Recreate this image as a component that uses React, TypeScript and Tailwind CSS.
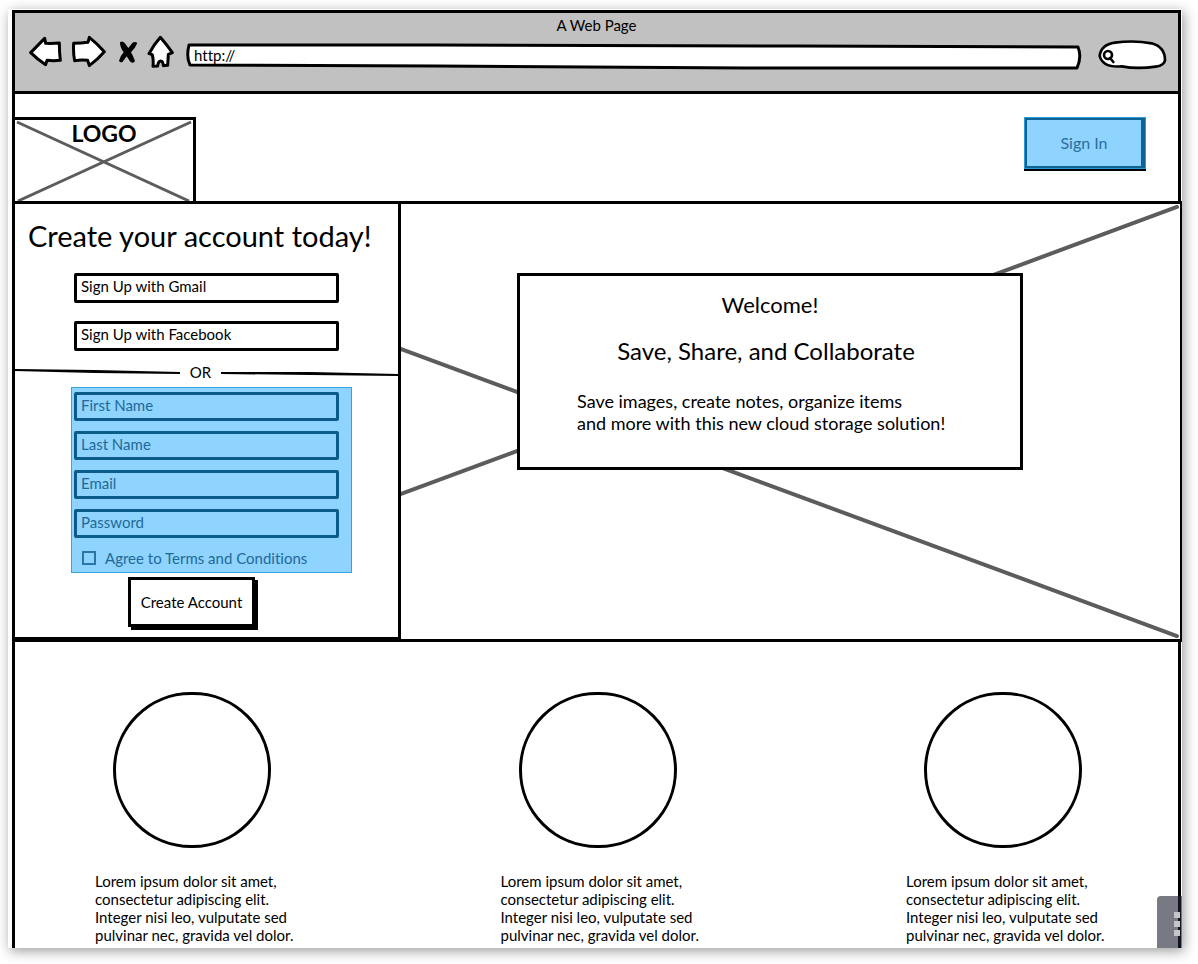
import React from "react";

const LOREM = [
  "Lorem ipsum dolor sit amet,",
  "consectetur adipiscing elit.",
  "Integer nisi leo, vulputate sed",
  "pulvinar nec, gravida vel dolor.",
];

const FIELDS = [
  { name: "First Name", type: "text" },
  { name: "Last Name", type: "text" },
  { name: "Email", type: "email" },
  { name: "Password", type: "password" },
];

function NavIcon({ kind }: { kind: "back" | "forward" | "stop" | "home" }) {
  const outline = {
    fill: "#fff",
    stroke: "#000",
    strokeWidth: 9,
    strokeLinejoin: "round" as const,
    strokeLinecap: "round" as const,
  };
  if (kind === "back")
    return (
      <svg viewBox="87 106 99 93" className="h-[31px] w-[33px]" aria-hidden="true">
        <path d="M92 156 L134 113 L137 128 Q158 129 178 127 Q178 154 181 179 Q160 181 141 179 L137 192 Q112 176 92 156Z" {...outline} />
      </svg>
    );
  if (kind === "forward")
    return (
      <svg viewBox="212 106 105 99" className="h-[33px] w-[35px]" aria-hidden="true">
        <path d="M220 131 Q242 131 263 128 L267 113 Q292 133 312 156 Q291 180 267 198 L262 182 Q242 180 223 183 Q218 158 220 131Z" {...outline} />
      </svg>
    );
  if (kind === "stop")
    return (
      <svg viewBox="354 114 60 72" className="h-6 w-5" aria-hidden="true">
        <path
          d="M360 121 Q367 115 374 123 L385 138 L397 123 Q404 117 412 123 Q406 138 393 151 Q400 163 405 177 Q400 186 391 179 L380 163 L368 179 Q361 184 357 176 Q360 163 371 151 Q360 137 360 121Z"
          fill="#000"
        />
      </svg>
    );
  return (
    <svg viewBox="440 104 81 99" className="h-[33px] w-[27px]" aria-hidden="true">
      <path d="M480 111 Q500 134 516 157 L504 162 L502 195 L489 196 Q488 182 481 182 Q474 182 472 197 L458 198 Q460 180 456 163 L446 160 Q460 134 480 111Z" {...outline} />
    </svg>
  );
}

function BrowserBar() {
  return (
    <header className="border-b-3 border-black bg-[#c1c1c1] pt-[2px] pb-[21px]">
      <h1 className="text-center text-[15px] leading-[20px]">A Web Page</h1>
      <div className="flex h-[35px] items-end pr-[10px] pl-[14px]">
        <nav className="flex shrink-0 items-center self-start" aria-label="Browser">
          <button type="button" aria-label="Back" className="mr-[9px]"><NavIcon kind="back" /></button>
          <button type="button" aria-label="Forward" className="mr-3"><NavIcon kind="forward" /></button>
          <button type="button" aria-label="Stop" className="mr-[9px]"><NavIcon kind="stop" /></button>
          <button type="button" aria-label="Home" className="mr-3"><NavIcon kind="home" /></button>
        </nav>
        <div className="relative h-[27px] grow">
          <svg viewBox="0 0 896 27" preserveAspectRatio="none" className="absolute inset-0 h-full w-full" aria-hidden="true">
            <path
              d="M3 2 L250 2 L610 3 L892 4 Q896 14 891 25 L560 25 L250 23 L4 22 Q0 14 3 2Z"
              fill="#fff" stroke="#000" strokeWidth="3" strokeLinejoin="round" vectorEffect="non-scaling-stroke"
            />
          </svg>
          <input aria-label="Address" defaultValue="http://" className="relative h-6 w-full bg-transparent px-2 text-[15px] outline-none" />
        </div>
        <div className="relative ml-4 h-[30px] w-[70px] shrink-0">
          <svg viewBox="597 124 210 90" className="absolute inset-0 h-full w-full" aria-hidden="true">
            <path
              d="M602 172 Q606 138 648 132 Q705 124 758 134 Q798 145 798 185 Q796 200 770 204 Q715 212 668 203 Q612 208 602 172Z"
              fill="#fff" stroke="#000" strokeWidth="8" strokeLinejoin="round"
            />
            <circle cx="627" cy="169" r="12" fill="#fff" stroke="#000" strokeWidth="8" />
            <path d="M633 178 L643 190" stroke="#000" strokeWidth="8" strokeLinecap="round" />
          </svg>
          <input aria-label="Search" className="relative h-full w-full bg-transparent pr-2 pl-5 text-[15px] outline-none" />
        </div>
      </div>
    </header>
  );
}

function TopBar() {
  return (
    <div className="flex items-start justify-between pt-[23px] pr-8">
      <div className="relative -ml-[3px] h-[84px] w-[184px] border-3 border-b-0 border-black">
        <svg viewBox="0 0 179 81" preserveAspectRatio="none" className="absolute inset-0 h-full w-full" aria-hidden="true">
          <path d="M2 2 L175 81 M177 2 L3 81" stroke="#5c5c5c" strokeWidth="3" fill="none" />
        </svg>
        <p className="relative text-center text-[23px] leading-[26px] font-bold">LOGO</p>
      </div>
      <div className="bg-[#8fd3ff] shadow-[0_2px_0_#000]">
        <button type="button" className="block h-[52px] w-[122px] border-3 border-r-[5px] border-[#0f6393] text-[16px] text-[#2a6f9a] outline-1 -outline-offset-1 outline-[#2b9ad6]">
          Sign In
        </button>
      </div>
    </div>
  );
}

function SignUpPanel() {
  return (
    <section className="relative w-[389px] shrink-0 border-x-3 border-b-2 border-black bg-white pt-[14px] pb-[10px]">
      <h2 className="pl-[13px] text-[29px] leading-[36px] whitespace-nowrap">Create your account today!</h2>
      <div className="mt-[19px] ml-[59px] flex w-[265px] flex-col gap-[18px]">
        <button type="button" className="h-[30px] rounded-[2px] border-[3px] border-black pb-1 pl-1 text-left text-[15px] leading-5">Sign Up with Gmail</button>
        <button type="button" className="h-[30px] rounded-[2px] border-[3px] border-black pb-1 pl-1 text-left text-[15px] leading-5">Sign Up with Facebook</button>
      </div>
      <div className="mt-[11px] flex items-center justify-between">
        <svg viewBox="0 0 165 8" className="h-2 w-[165px]" aria-hidden="true">
          <path d="M0 1 L80 2 L165 4 L165 6 L80 5 L0 3Z" fill="#000" />
        </svg>
        <span className="text-[15px] leading-5">OR</span>
        <svg viewBox="0 0 177 8" className="h-2 w-[177px]" aria-hidden="true">
          <path d="M0 4 L90 4 L177 6 L177 8 L90 7 L0 6Z" fill="#000" />
        </svg>
      </div>
      <form onSubmit={(e) => e.preventDefault()}>
        <div className="mt-[5px] ml-14 flex w-[281px] flex-col gap-[10px] border border-[#36a3e0] bg-[#8fd3ff] px-[2px] pt-1 pb-1">
          {FIELDS.map((f) => (
            <input
              key={f.name}
              type={f.type}
              aria-label={f.name}
              placeholder={f.name}
              className="h-[29px] w-[265px] rounded-[2px] border-3 border-[#0c5c8b] bg-transparent pb-1 pl-1 text-[15px] text-[#1f6997] outline-none placeholder:text-[#1f6997]"
            />
          ))}
          <label className="flex items-center gap-[9px] pl-2 text-[15px] leading-5 text-[#1f6997]">
            <input type="checkbox" className="h-[14px] w-[14px] appearance-none border-2 border-[#2a76a6]" />
            Agree to Terms and Conditions
          </label>
        </div>
        <button type="submit" className="mt-[4px] ml-[113px] h-[50px] w-[127px] border-[3px] border-black bg-white text-[15px] whitespace-nowrap shadow-[3px_3px_0_#000]">
          Create Account
        </button>
      </form>
    </section>
  );
}

function Hero() {
  return (
    <div className="relative -mr-1 -ml-[3px] flex border-y-3 border-r-2 border-black bg-white">
      <svg viewBox="0 0 1168 436" preserveAspectRatio="none" className="absolute inset-0 h-full w-full" aria-hidden="true">
        <path d="M2 2 L1165 433 M2 434 L1165 3" stroke="#5c5c5c" strokeWidth="4" strokeLinecap="round" fill="none" />
      </svg>
      <SignUpPanel />
      <section className="relative mt-[69px] mr-[157px] ml-[116px] h-[197px] grow border-[3px] border-black bg-white pt-4">
        <p className="text-center text-[22px] leading-[26px]">Welcome!</p>
        <p className="mt-5 pr-2 text-center text-[24px] leading-[26px]">Save, Share, and Collaborate</p>
        <p className="mt-[26px] pl-[57px] text-[18px] leading-[22px] whitespace-nowrap">
          Save images, create notes, organize items
          <br />
          and more with this new cloud storage solution!
        </p>
      </section>
    </div>
  );
}

function Features() {
  return (
    <div className="flex justify-between pt-[50px] pr-[68px] pl-20">
      {[0, 1, 2].map((i) => (
        <article key={i} className="w-[204px]">
          <div className="ml-[18px] h-[156px] w-[158px] rounded-full border-3 border-black" />
          <p className="mt-6 text-[15px] leading-[18px] whitespace-nowrap">
            {LOREM.map((line) => (
              <span key={line} className="block">{line}</span>
            ))}
          </p>
        </article>
      ))}
    </div>
  );
}

export default function App() {
  return (
    <div className="h-screen overflow-hidden bg-white pt-[9px] pr-4 pb-4 pl-2 font-['Lato',sans-serif] text-black [font-variant-ligatures:none]">
      <div className="relative h-full bg-white shadow-[2px_3px_12px_rgba(0,0,0,0.4)]">
        <div className="h-full overflow-hidden pt-px pr-px pl-1">
          <main className="h-full border-x-3 border-t-3 border-black">
            <BrowserBar />
            <TopBar />
            <Hero />
            <Features />
          </main>
        </div>
        <button type="button" aria-label="More" className="absolute right-0 bottom-0 flex h-[52px] w-[25px] flex-col items-end justify-center gap-[3px] rounded-tl bg-[#1c212e]/60 pr-[2px] pt-1">
          <span className="h-[6px] w-[6px] bg-[#c3c5ca]" />
          <span className="h-[6px] w-[6px] bg-[#c3c5ca]" />
          <span className="h-[6px] w-[6px] bg-[#c3c5ca]" />
        </button>
      </div>
    </div>
  );
}
